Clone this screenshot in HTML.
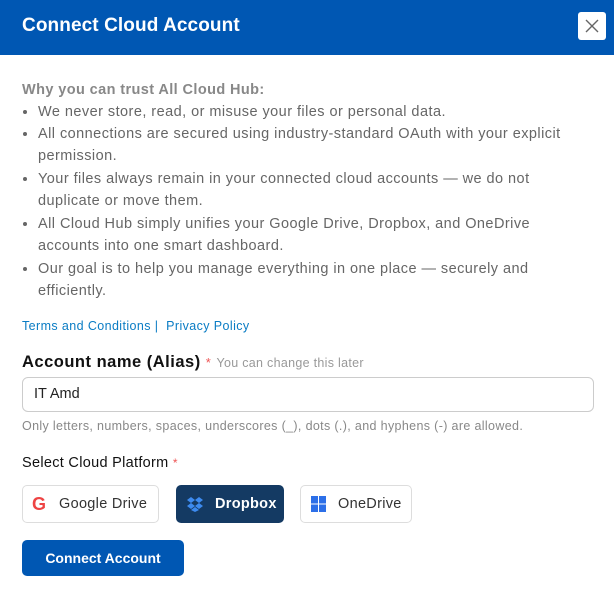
<!DOCTYPE html><html><head><style>
body{margin:0;width:614px;height:590px;background:#fff;font-family:"Liberation Sans",sans-serif;position:relative;overflow:hidden}
.hd{position:absolute;left:0;top:0;width:614px;height:55px;background:#0057b3}
.hd h1{position:absolute;left:22px;top:15px;margin:0;color:#fff;font-size:19px;font-weight:bold;letter-spacing:0.1px}
.x{position:absolute;left:578px;top:12px;width:28px;height:28px;background:#fff;border-radius:3px}
.t{position:absolute;left:22px;color:#666;font-size:14.5px;line-height:22.4px;letter-spacing:0.4px}
.li{position:absolute;left:38px;color:#666;font-size:14.5px;line-height:22.4px;width:570px;letter-spacing:0.45px;white-space:nowrap}
.dot{position:absolute;left:-15px;top:9px;width:4px;height:4px;border-radius:2px;background:#666}
.btn{position:absolute;top:485px;height:38px;border:1px solid #ddd;border-radius:5px;box-sizing:border-box;font-size:14.5px;line-height:36px;color:#333;letter-spacing:0.3px}
</style></head><body>
<div class="hd"><h1>Connect Cloud Account</h1><div class="x"><svg width="28" height="28"><path d="M8 8L20 20M20 8L8 20" stroke="#666" stroke-width="1.4"/></svg></div></div>
<div class="t" style="top:79px;font-weight:bold;color:#888">Why you can trust All Cloud Hub:</div>
<div class="li" style="top:101px"><i class="dot"></i>We never store, read, or misuse your files or personal data.</div>
<div class="li" style="top:123px"><i class="dot"></i>All connections are secured using industry-standard OAuth with your explicit<br>permission.</div>
<div class="li" style="top:168px"><i class="dot"></i>Your files always remain in your connected cloud accounts — we do not<br>duplicate or move them.</div>
<div class="li" style="top:213px"><i class="dot"></i>All Cloud Hub simply unifies your Google Drive, Dropbox, and OneDrive<br>accounts into one smart dashboard.</div>
<div class="li" style="top:258px"><i class="dot"></i>Our goal is to help you manage everything in one place — securely and<br>efficiently.</div>
<div style="position:absolute;left:22px;top:319px;font-size:12.5px;color:#0a7cc4;letter-spacing:0.4px">Terms and Conditions |&nbsp; Privacy Policy</div>
<div style="position:absolute;left:22px;top:353px;font-size:16.5px;font-weight:bold;color:#111;letter-spacing:0.5px">Account name (Alias) <span style="color:#e55;font-weight:normal;font-size:13px">*</span> <span style="color:#999;font-weight:normal;font-size:12.5px;letter-spacing:0.3px">You can change this later</span></div>
<div style="position:absolute;left:22px;top:377px;width:572px;height:35px;border:1px solid #ccc;border-radius:6px;box-sizing:border-box;font-size:14.5px;line-height:33px;padding-left:11px;color:#222">IT Amd</div>
<div style="position:absolute;left:22px;top:419px;font-size:12.5px;color:#888;letter-spacing:0.35px;white-space:nowrap">Only letters, numbers, spaces, underscores (_), dots (.), and hyphens (-) are allowed.</div>
<div style="position:absolute;left:22px;top:455px;font-size:14.5px;color:#111;letter-spacing:0.3px">Select Cloud Platform <span style="color:#e55;font-size:12px">*</span></div>
<div class="btn" style="left:22px;width:137px"><span style="position:absolute;left:9px;color:#e44;font-weight:bold;font-size:18px">G</span><span style="position:absolute;left:36px">Google Drive</span></div>
<div class="btn" style="left:176px;width:108px;background:#143a63;border-color:#143a63;color:#fff;font-weight:bold"><svg style="position:absolute;left:10px;top:10px" width="16" height="16"><path d="M4 1L8 4 4 7 0 4zM12 1L16 4 12 7 8 4zM4 7L8 10 4 13 0 10zM12 7L16 10 12 13 8 10zM8 11L12 14 8 16 4 14z" fill="#3d8bf0"/></svg><span style="position:absolute;left:38px">Dropbox</span></div>
<div class="btn" style="left:300px;width:112px"><svg style="position:absolute;left:10px;top:10px" width="15" height="16"><rect width="15" height="16" fill="#2c6fe8"/><path d="M7.5 0V16M0 8H15" stroke="#fff" stroke-width="1"/></svg><span style="position:absolute;left:37px">OneDrive</span></div>
<div style="position:absolute;left:22px;top:540px;width:162px;height:36px;background:#0057b3;border-radius:5px;color:#fff;font-weight:bold;font-size:14px;text-align:center;line-height:36px">Connect Account</div>
</body></html>
